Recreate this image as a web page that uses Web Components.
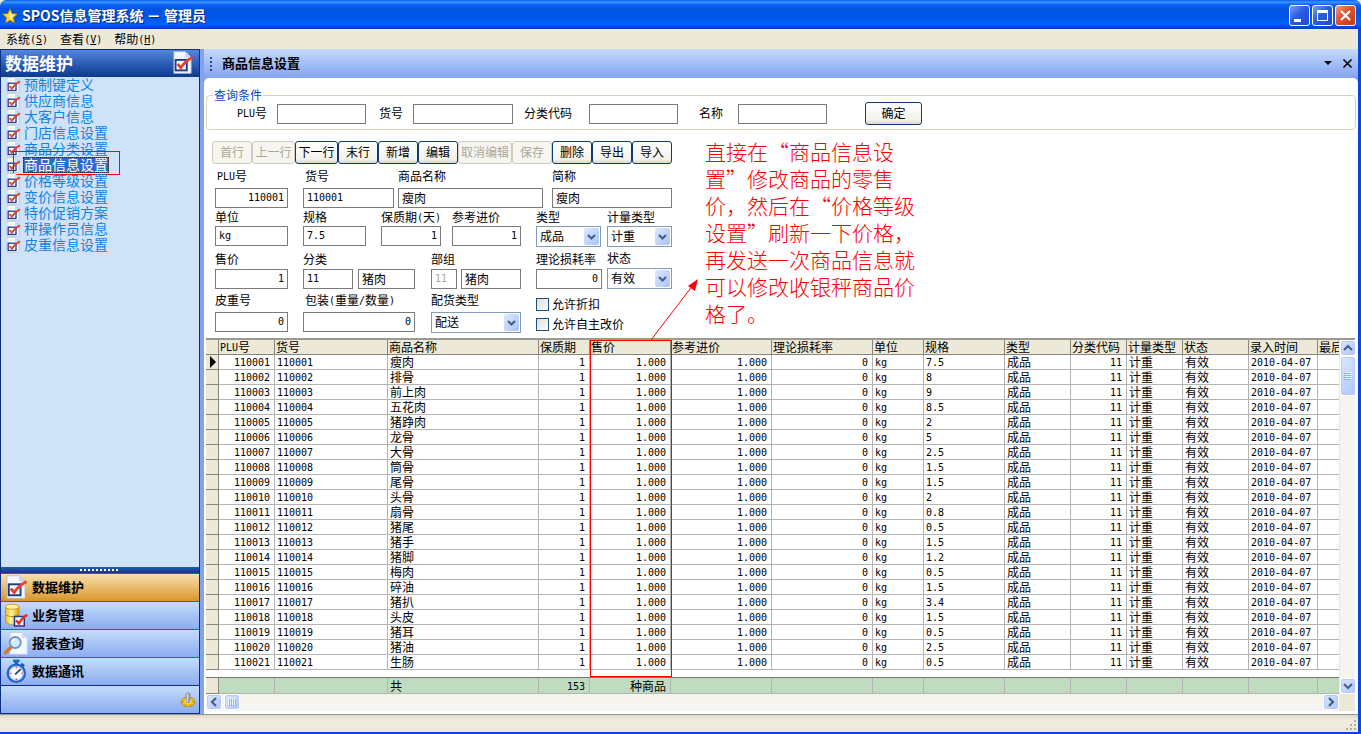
<!DOCTYPE html>
<html lang="zh-CN">
<head>
<meta charset="utf-8">
<title>SPOS信息管理系统 － 管理员</title>
<style>
html,body{margin:0;height:100%}
body{font:12px/16px "Noto Sans CJK SC","Liberation Sans",sans-serif;color:#000;background:#ece9d8;overflow:hidden}
</style>
</head>
<body>
<spos-app></spos-app>
<script>
const base = `*{box-sizing:border-box}
button,input,select{font:inherit;color:inherit;margin:0}
.m{font-family:"DejaVu Sans Mono","Liberation Mono",monospace;font-size:10px}
span.m{line-height:1px;vertical-align:1px}
svg{display:block}`;
const mix = t => t.replace(/[!-~]+/g, s => `<span class="m">${s}</span>`);
const define = (name, render) => customElements.define(name, class extends HTMLElement {
  connectedCallback() {
    if (this.shadowRoot) return;
    const t = document.createElement('template');
    t.innerHTML = render(this);
    this.attachShadow({mode: 'open'}).append(t.content.cloneNode(true));
  }
});

const icons = {
  star: `<path d="M8 .5l2.200 5 5.400.5-4.100 3.700 1.300 5.500L8 12.400 3.200 15.200l1.300-5.500L.4 6l5.400-.5z" fill="#ffd83a" stroke="#8c6a10" stroke-width=".8"/><path d="M8 3l1.200 3.600 3 .4-2.600 2L10 12 8 10.500z" fill="#fff19a"/>`,
  check: `<path d="M2 .5h8l4 4v11H2z" fill="#f6faff" stroke="#a9bddc" stroke-width=".6"/><path d="M10 .5v4h4z" fill="#c6d6ef"/><rect x="3.200" y="6.200" width="7.800" height="7.300" fill="#fff" stroke="#1b3c8c" stroke-width="1.300"/><path d="M4.600 9l2.200 2.800Q9 7.600 15 4.300" fill="none" stroke="#e8402a" stroke-width="1.900"/>`,
  data: `<defs><linearGradient id="g"><stop stop-color="#f1b91e"/><stop offset=".4" stop-color="#fff7a0"/><stop offset="1" stop-color="#dba010"/></linearGradient></defs><path d="M1 2.500v9.500c0 3 9 3 9 0V2.500z" fill="url(#g)" stroke="#c4890c" stroke-width=".5"/><ellipse cx="5.500" cy="2.500" rx="4.500" ry="1.700" fill="#fff39a" stroke="#c4890c" stroke-width=".5"/><path d="M1 7.500c1.500 2 7.500 2 9 0" fill="none" stroke="#c4890c" stroke-width=".7"/><rect x="7" y="9" width="6.500" height="6.300" fill="#fff" stroke="#1b3c8c"/><path d="M8 11.500l2 2.200q2-4 5.500-5.800" fill="none" stroke="#e8281a" stroke-width="1.600"/>`,
  search: `<path d="M4 1h8l3.500 3.500v11H4z" fill="#f3f8ff" stroke="#c0d0e8" stroke-width=".6"/><path d="M12 1v3.500h3.500z" fill="#cbd9ef"/><path d="M1 14.500l4-4" stroke="#d07c2c" stroke-width="2.200" stroke-linecap="round"/><circle cx="7.500" cy="7.700" r="3.700" fill="#cfeaff" stroke="#7292c4" stroke-width="1.200"/><path d="M5.500 7.500a2.300 2.300 0 0 1 2-2" stroke="#fff" fill="none"/>`,
  watch: `<rect x="6" y=".3" width="4.400" height="2" rx=".6" fill="#2a6bd0"/><path d="M7.200 2h2v2h-2zM12 2.500l2 1.700-1.400 1.400-1.800-1.500z" fill="#1d55b4"/><circle cx="8.200" cy="9.500" r="5.700" fill="#f2f9ff" stroke="#2463c6" stroke-width="1.600"/><circle cx="8.200" cy="9.500" r="4.600" fill="none" stroke="#9dc4f2" stroke-width=".7"/><path d="M7.400 10.200l3.800-3.400" stroke="#37435a" stroke-width="1.200"/><path d="M8.200 5.200v1M8.200 13v1M4 9.500h1M11.600 9.500h1" stroke="#d03a2a" stroke-width=".8"/>`,
  gear: `<ellipse cx="8" cy="10" rx="7" ry="4.800" fill="#efc21e" stroke="#ad8410" stroke-width=".8"/><path d="M1 11l3-2M15 11l-3-2M4.500 14l1.500-2M11.500 14L10 12" stroke="#b98c12"/><ellipse cx="8" cy="9.500" rx="3.300" ry="2" fill="#fff0a0"/><rect x="6" y="1" width="4" height="9.500" rx="1" fill="#a8a8ac" stroke="#77777c" stroke-width=".6"/><path d="M7.300 1.500v8.500" stroke="#e9e9ec"/>`
};
const svg = (n, s) => `<svg width="${s}" height="${s}" viewBox="0 0 16 16" aria-hidden="true">${icons[n]}</svg>`;

define('spos-titlebar', () => `<style>${base}
:host{display:flex;align-items:center;height:29px;padding:2px 5px 0 2px;color:#fff;border-radius:6px 6px 0 0;
background:linear-gradient(#0a5be8,#3a95ff 2px,#0a62f0 5px,#0254e0 9px,#0058ea 18px,#0064fa 24px,#0048d8 27px,#0a3cae)}
h1{margin:0 auto 0 4px;padding-bottom:2px;font:bold 14px/20px "Noto Sans CJK SC",sans-serif;text-shadow:1px 1px 1px #00237a}
button{width:21px;height:21px;margin-left:2px;padding:0;border:1px solid #fff;border-radius:3px;background:linear-gradient(135deg,#7a9ff5,#2a5ce6 45%,#1c48d0)}
button.x{background:linear-gradient(135deg,#f0987c,#e2502c 45%,#c43a18)}
</style>${svg('star', 16)}<h1>SPOS信息管理系统 － 管理员</h1>
<button aria-label="最小化"><svg width="19" height="19"><path d="M4 13h7v3H4z" fill="#fff"/></svg></button>
<button aria-label="最大化"><svg width="19" height="19"><path d="M4 4h11v11H4zM5 7v7h9V7z" fill="#fff" fill-rule="evenodd"/></svg></button>
<button class="x" aria-label="关闭"><svg width="19" height="19"><path d="M5 5l9 9M14 5l-9 9" stroke="#fff" stroke-width="2.200"/></svg></button>`);

define('spos-menubar', () => `<style>${base}
:host{display:flex;height:20px;padding-left:6px;gap:12px;background:#ece9d8}
button{border:0;background:none;padding:0;line-height:18px;height:19px}
</style>${[['系统','S'],['查看','V'],['帮助','H']].map(([t, k]) => `<button>${t}<span class="m">(<u>${k}</u>)</span></button>`).join('')}`);

const tree = ['预制键定义','供应商信息','大客户信息','门店信息设置','商品分类设置','商品信息设置','价格等级设置','变价信息设置','特价促销方案','秤操作员信息','皮重信息设置'];
const groups = [['check','数据维护'],['data','业务管理'],['search','报表查询'],['watch','数据通讯']];
define('spos-sidebar', () => `<style>${base}
:host{display:flex;flex-direction:column;width:200px;flex:none;border:solid #0b2f80;border-width:1px;background:#cfe2f7}
header{display:flex;height:27px;align-items:center;justify-content:space-between;padding:0 5px 2px 4px;background:linear-gradient(#5487dc,#2c5db8 50%,#0c3a8e);color:#fff}
h2{margin:0;font-size:17px;line-height:24px}
ul{list-style:none;margin:0;padding:0 0 0 4px;flex:1}
li{position:relative;display:flex;height:16px;align-items:center;font-size:14px;line-height:14px}
li svg{margin-right:2px}
a{color:#0c84ea;text-decoration:none;padding:0 1px 2px}
a.on{background:#316ac5;color:#fff;outline:1px dotted #223;outline-offset:-1px}
.mark{position:absolute;left:8px;top:-6px;width:107px;height:24px;border:1px solid #ff0000}
.grip{height:6px;background:linear-gradient(#2c56ae,#0c3a8e);display:flex;align-items:center;justify-content:center}
.grip i{width:40px;height:2px;background:repeating-linear-gradient(90deg,#fff 0 2px,transparent 2px 4px)}
nav button{display:flex;width:100%;height:28px;align-items:center;gap:4px;padding:0 0 2px 3px;border:0;border-top:1px solid #0a7c78;background:linear-gradient(#c4dcfa,#8cacf0);font-size:13px;font-weight:bold;line-height:20px}
nav button:first-child{background:linear-gradient(#f7dfae,#e9bb6c 50%,#d8962c)}
footer{height:28px;border-top:1px solid #0b2f80;background:linear-gradient(#c4dcfa,#8cacf0);display:flex;align-items:center;justify-content:flex-end;padding-right:3px}
</style><header><h2>数据维护</h2>${svg('check', 23)}</header>
<ul>${tree.map((t, i) => `<li>${svg('check', 16)}<a href="#"${i === 5 ? ' class="on"' : ''}>${t}</a>${i === 5 ? '<span class="mark"></span>' : ''}</li>`).join('')}</ul>
<div class="grip"><i></i></div>
<nav>${groups.map(([i, t]) => `<button>${svg(i, 24)}${t}</button>`).join('')}</nav>
<footer>${svg('gear', 16)}</footer>`);

/* Label and text box; "inline" puts them side by side. */
let uid = 0;
define('spos-field', el => {
  const id = 'f' + ++uid, a = n => el.getAttribute(n) || '', opts = el.hasAttribute('select'), v = a('value');
  const num = /^[!-~]*$/.test(v) ? 'm' : '';
  return `<style>${base}
:host{display:flex;flex-direction:column;gap:var(--gap,2px);min-width:0;align-items:flex-start}
:host([inline]){flex-direction:row;align-items:center}
label{line-height:14px;height:16px;white-space:nowrap;padding-left:var(--indent,0)}
.box{display:grid;width:var(--w)}
input,select{grid-area:1/1;width:100%;height:20px;border:1px solid #7b7b7b;background:#fff;padding:0 3px;border-radius:0}
input{padding-bottom:2px}
select{height:21px;appearance:none;border-color:#7f9db9;line-height:17px;padding-bottom:2px}
svg{grid-area:1/1;justify-self:end;align-self:center;margin-right:2px;pointer-events:none}
.r{text-align:right}input:disabled{color:#aca899}
</style>${a('label') ? `<label for="${id}">${mix(a('label'))}</label>` : ''}<span class="box">${opts
  ? `<select id="${id}"><option>${v}</option></select><svg width="15" height="17"><defs><linearGradient id="a" x2="1" y2="1"><stop stop-color="#dce8fe"/><stop offset="1" stop-color="#aac2f6"/></linearGradient></defs><rect width="15" height="17" rx="2" fill="url(#a)"/><path d="M4 7l3.500 3.500L11 7" fill="none" stroke="#44608c" stroke-width="2.200"/></svg>`
  : `<input id="${id}" class="${num} ${el.hasAttribute('right') ? 'r' : ''}" value="${v}" aria-label="${a('label') || a('name')}"${el.hasAttribute('disabled') ? ' disabled' : ''}>`}</span>`;
});

define('spos-button', el => `<style>${base}
:host{display:block}
button{width:100%;height:23px;padding:0 0 2px;border:1px solid #0c3c74;border-radius:3px;background:linear-gradient(#fff,#f3f2ec 80%,#dcd8cc);line-height:18px;white-space:nowrap}
button:disabled{color:#aca899;border-color:#cfccbe;background:#f6f5f0}
</style><button${el.hasAttribute('disabled') ? ' disabled' : ''}><slot></slot></button>`);

define('spos-query', () => `<style>${base}
:host{display:block;margin:10px 2px 0}
fieldset{margin:0;padding:0 0 4px 30px;border:1px solid #d4d0be;border-radius:4px;display:flex;align-items:center;min-width:0}
legend{margin-left:-24px;padding:0 1px;color:#0046d5;line-height:14px}
spos-field{--w:89px;margin-right:13px}
spos-button{width:57px;margin-left:25px}
</style><fieldset><legend>查询条件</legend>
<spos-field inline label="PLU号" style="--gap:10px"></spos-field>
<spos-field inline label="货号" style="--gap:10px;--w:100px;margin-right:11px"></spos-field>
<spos-field inline label="分类代码" style="--gap:17px;margin-right:21px"></spos-field>
<spos-field inline label="名称" style="--gap:15px"></spos-field>
<spos-button>确定</spos-button></fieldset>`);

const tools = [['首行',40,1],['上一行',43,1],['下一行',43],['末行',40],['新增',40],['编辑',40],['取消编辑',54,1],['保存',40,1],['删除',40],['导出',40],['导入',40]];
define('spos-editor', () => `<style>${base}
:host{display:flex;flex-direction:column;width:460px;flex:none;margin-left:8px}
.tools{display:flex;height:28px}
form{padding-left:3px}
.row{display:grid;height:41px;justify-content:start}
.ticks{display:grid;grid-auto-rows:20px;align-items:center;margin-top:1px}
.ticks label{display:flex;align-items:center;gap:3px;line-height:16px;white-space:nowrap}
.ticks input{appearance:none;width:13px;height:13px;border:1px solid #1c5180;background:linear-gradient(135deg,#dcdcd7,#fff)}
</style>
<div class="tools">${tools.map(([t, w, d]) => `<spos-button style="width:${w}px"${d ? ' disabled' : ''}>${t}</spos-button>`).join('')}</div>
<form>
<div class="row" style="grid-template-columns:88px 95px 154px 120px;--gap:3px">
<spos-field label="PLU号" value="110001" right style="--w:73px;--indent:2px"></spos-field>
<spos-field label="货号" value="110001" style="--w:91px;--indent:2px"></spos-field>
<spos-field label="商品名称" value="瘦肉" style="--w:145px"></spos-field>
<spos-field label="简称" value="瘦肉" style="--w:120px"></spos-field></div>
<div class="row" style="grid-template-columns:88px 78px 71px 84px 71px 65px;--gap:0px">
<spos-field label="单位" value="kg" style="--w:73px"></spos-field>
<spos-field label="规格" value="7.5" style="--w:63px"></spos-field>
<spos-field label="保质期(天)" value="1" right style="--w:60px"></spos-field>
<spos-field label="参考进价" value="1" right style="--w:69px"></spos-field>
<spos-field label="类型" value="成品" select style="--w:65px"></spos-field>
<spos-field label="计量类型" value="计重" select style="--w:65px"></spos-field></div>
<div class="row" style="grid-template-columns:88px 55px 73px 30px 75px 71px 65px;--gap:1px;align-items:end;height:38px;margin-bottom:4px">
<spos-field label="售价" value="1" right style="--w:73px"></spos-field>
<spos-field label="分类" value="11" style="--w:50px"></spos-field>
<spos-field name="分类名称" value="猪肉" style="--w:57px"></spos-field>
<spos-field label="部组" value="11" disabled style="--w:26px"></spos-field>
<spos-field name="部组名称" value="猪肉" style="--w:60px"></spos-field>
<spos-field label="理论损耗率" value="0" right style="--w:66px"></spos-field>
<spos-field label="状态" value="有效" select style="--w:65px"></spos-field></div>
<div class="row" style="grid-template-columns:88px 128px 105px 120px;--gap:3px">
<spos-field label="皮重号" value="0" right style="--w:73px"></spos-field>
<spos-field label="包装(重量/数量)" value="0" right style="--w:112px;--indent:2px"></spos-field>
<spos-field label="配货类型" value="配送" select style="--w:90px"></spos-field>
<div class="ticks"><label><input type="checkbox">允许折扣</label><label><input type="checkbox">允许自主改价</label></div></div>
</form>`);

define('spos-note', () => `<style>${base}
:host{display:block;position:relative;margin:-3px 0 0 33px;width:220px;color:#fe0000}
p{margin:0;font:300 21px/27px "Noto Sans CJK SC Light","Noto Sans CJK SC",sans-serif;white-space:nowrap}
svg{position:absolute;left:-56px;top:139px}
</style><p>直接在“商品信息设<br>置”修改商品的零售<br>价，然后在“价格等级<br>设置”刷新一下价格，<br>再发送一次商品信息就<br>可以修改收银秤商品价<br>格了。</p>
<svg width="52" height="64" aria-hidden="true"><path d="M2 63L44 8" stroke="#fe0000" fill="none"/><path d="M49 2l-3 12-7-5z" fill="#fe0000"/></svg>`);

const cols = [['',13],['PLU号',56,1],['货号',113],['商品名称',151],['保质期',51,1],['售价',81,1],['参考进价',101,1],['理论损耗率',101,1],['单位',51],['规格',81],['类型',66],['分类代码',56,1],['计量类型',56],['状态',66],['录入时间',69],['最后',0]];
const names = '瘦肉 排骨 前上肉 五花肉 猪踭肉 龙骨 大骨 筒骨 尾骨 头骨 扇骨 猪尾 猪手 猪脚 梅肉 碎油 猪扒 头皮 猪耳 猪油 生肠'.split(' ');
const specs = '7.5 8 9 8.5 2 5 2.5 1.5 1.5 2 0.8 0.5 1.5 1.2 0.5 1.5 3.4 1.5 0.5 2.5 0.5'.split(' ');
const arrow = { up:'M4 10l4-4 4 4', down:'M4 6l4 4 4-4', left:'M10 4L6 8l4 4', right:'M6 4l4 4-4 4' };
define('spos-grid', () => `<style>${base}
:host{display:grid;grid-template-columns:minmax(0,1fr) 16px;margin:0 3px 0 2px;border-top:2px solid #9c9a90}
.view{position:relative;overflow:hidden}
table{border-collapse:separate;border-spacing:0;table-layout:fixed;width:100%;background:#fff}
th,td{height:15px;padding:0 0 0 2px;border:solid #b4b4b4;border-width:0 1px 1px 0;font-weight:normal;text-align:left;line-height:14px;white-space:nowrap}
th{background:#ece9d8;border-color:#88867c;padding-left:1px}
th:last-child,td:last-child{border-right-width:0}
td.r{text-align:right;padding:0 4px 0 0}
td:first-child{background:#ece9d8;border-color:#88867c;padding:0}
tr.gap td{height:8px;background:#fff;border-width:0 0 1px;border-color:#77756c;padding:0}
tfoot td{background:#c0dcc0;line-height:15px;height:16px}
.mark{position:absolute;left:384px;top:0;width:82px;height:337px;border:1px solid #ff0000;pointer-events:none}
.v,.h{display:flex;background:#f5f4ee}
.v{flex-direction:column;border-left:1px solid #eceadf}
.h{height:17px}
.sb{flex:none;width:16px;height:16px;padding:0;border:1px solid #fff;border-radius:3px;background:linear-gradient(135deg,#dce7fe,#aec6f8);box-shadow:inset 0 0 0 1px #b7caf5}
.sb svg{margin:-1px}
.v .thumb{height:40px;margin-bottom:auto}.h .thumb{margin-left:2px;margin-right:auto}
.sb.thumb svg{margin:auto}
.v .thumb svg{transform:rotate(90deg)}
.corner{background:#ece9d8}
</style>
<div class="view"><table><colgroup>${cols.map(c => `<col${c[1] ? ` style="width:${c[1]}px"` : ''}>`).join('')}</colgroup>
<thead><tr>${cols.map(c => `<th>${mix(c[0])}</th>`).join('')}</tr></thead>
<tbody>${names.map((n, i) => {
  const id = String(110001 + i);
  return '<tr>' + [i ? '' : '<svg width="12" height="14"><path d="M4 1l6 6-6 6z"/></svg>', id, id, n, '1', '1.000', '1.000', '0', 'kg', specs[i], '成品', '11', '计重', '有效', '2010-04-07', '']
    .map((v, j) => `<td${cols[j][2] ? ' class="r"' : ''}>${j ? mix(v) : v}</td>`).join('') + '</tr>';
}).join('')}</tbody>
<tfoot><tr class="gap"><td colspan="16"></td></tr><tr>${cols.map((c, j) => `<td${c[2] ? ' class="r"' : ''}>${{3:'共',4:'<span class="m">153</span>',5:'种商品'}[j] || ''}</td>`).join('')}</tr></tfoot></table><span class="mark"></span></div>
<div class="v">${sb('up', '向上滚动')}${thumb('垂直滑块')}${sb('down', '向下滚动')}</div>
<div class="h">${sb('left', '向左滚动')}${thumb('水平滑块')}${sb('right', '向右滚动')}</div><div class="corner"></div>`);
function sb(d, l) { return `<button class="sb" aria-label="${l}"><svg width="16" height="16"><path d="${arrow[d]}" fill="none" stroke="#44608c" stroke-width="2.200"/></svg></button>`; }
function thumb(l) { return `<button class="sb thumb" aria-label="${l}"><svg width="10" height="8"><path d="M1.500 0v7M3.500 0v7M5.500 0v7M7.500 0v7" stroke="#eef4fe"/><path d="M2.500 1v7M4.500 1v7M6.500 1v7M8.500 1v7" stroke="#8cb0f8"/></svg></button>`; }

define('spos-panel', () => `<style>${base}
:host{display:flex;flex-direction:column;flex:1;min-width:0;margin-left:4px}
header{display:flex;align-items:center;height:29px;padding:0 5px 0 6px;background:linear-gradient(#c6dafb,#9db9f5 60%,#85a2ef)}
.dots{width:2px;height:14px;background:repeating-linear-gradient(#2c4a8c 0 2px,transparent 2px 4px)}
h2{margin:0 auto 0 10px;font-size:13px;line-height:20px;padding-bottom:2px}
button{border:0;background:none;padding:0;width:11px;height:11px;margin-left:8px}
main{flex:1;background:#fff;border-radius:5px 5px 0 0;display:flex;flex-direction:column;overflow:hidden}
.top{display:flex;height:197px;margin-top:11px}
.wrap{background:#85a2ef;flex:1;display:flex;flex-direction:column}
</style><header><i class="dots"></i><h2>商品信息设置</h2>
<button aria-label="面板菜单"><svg width="11" height="11"><path d="M1 3h8L5 7z"/></svg></button>
<button aria-label="关闭面板"><svg width="11" height="11"><path d="M1.500 1.500l8 8M9.500 1.500l-8 8" stroke="#000" stroke-width="1.600"/></svg></button></header>
<div class="wrap"><main><spos-query></spos-query>
<div class="top"><spos-editor></spos-editor><spos-note></spos-note></div>
<spos-grid></spos-grid></main></div>`);

define('spos-app', () => `<style>${base}
:host{display:flex;flex-direction:column;min-height:100vh;background:#ece9d8}
.body{display:flex;flex-direction:column;flex:1;border:solid #0a46d8;border-width:0 3px 2px 0}
.work{display:flex;flex:1;background:#85a2ef}
footer{height:18px;border-top:1px solid #99978a;background:linear-gradient(#dcd9c8,#efecdf 5px,#ece9d8);display:flex;align-items:end;justify-content:flex-end}
</style><spos-titlebar></spos-titlebar>
<div class="body"><spos-menubar></spos-menubar>
<div class="work"><spos-sidebar></spos-sidebar><spos-panel></spos-panel></div>
<footer><svg width="13" height="13" aria-hidden="true"><path d="M9 1h2v2H9zM5 5h2v2H5zM9 5h2v2H9zM1 9h2v2H1zM5 9h2v2H5zM9 9h2v2H9z" fill="#b4b09c"/></svg></footer></div>`);
</script>
</body>
</html>
